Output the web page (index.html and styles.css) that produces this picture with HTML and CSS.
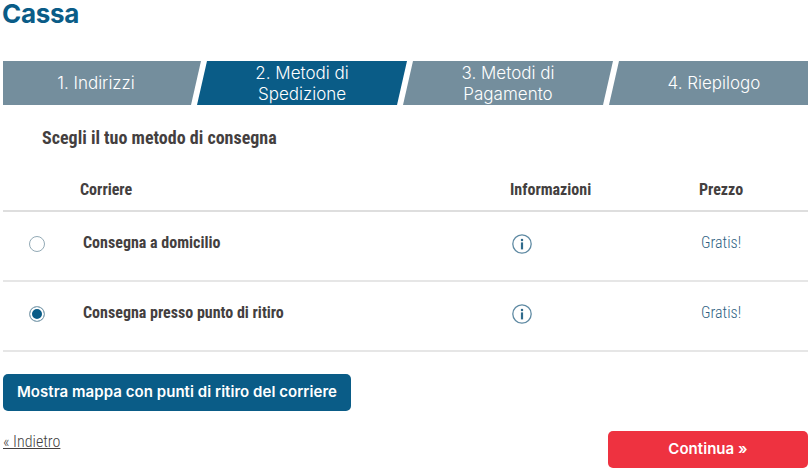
FILE: index.html
```html
<!DOCTYPE html>
<html lang="it">
<head>
<meta charset="utf-8">
<title>Cassa</title>
<link rel="stylesheet" href="styles.css">
</head>
<body>
<main class="page">
  <h1 class="title">Cassa</h1>
  <ol class="steps">
    <li class="step step-first">1. Indirizzi</li>
    <li class="step step-active">2. Metodi di Spedizione</li>
    <li class="step">3. Metodi di Pagamento</li>
    <li class="step step-last">4. Riepilogo</li>
  </ol>
  <h2 class="subtitle">Scegli il tuo metodo di consegna</h2>
  <div class="table">
    <div class="row head">
      <div></div>
      <div class="c-name">Corriere</div>
      <div class="c-info">Informazioni</div>
      <div class="c-price">Prezzo</div>
    </div>
    <div class="row body">
      <div class="c-radio"><span class="radio"></span></div>
      <div class="c-name strong">Consegna a domicilio</div>
      <div class="c-info"><svg class="info" viewBox="0 0 20 20" width="20" height="20"><circle cx="10" cy="10" r="9.2" fill="none" stroke="#5f8aa3" stroke-width="1.3"/><circle cx="10" cy="5.9" r="1.25" fill="#2f6a8c"/><rect x="8.9" y="8.4" width="2.2" height="7" fill="#2f6a8c"/></svg></div>
      <div class="c-price price">Gratis!</div>
    </div>
    <div class="row body">
      <div class="c-radio"><span class="radio checked"></span></div>
      <div class="c-name strong">Consegna presso punto di ritiro</div>
      <div class="c-info"><svg class="info" viewBox="0 0 20 20" width="20" height="20"><circle cx="10" cy="10" r="9.2" fill="none" stroke="#5f8aa3" stroke-width="1.3"/><circle cx="10" cy="5.9" r="1.25" fill="#2f6a8c"/><rect x="8.9" y="8.4" width="2.2" height="7" fill="#2f6a8c"/></svg></div>
      <div class="c-price price">Gratis!</div>
    </div>
  </div>
  <button class="btn btn-map" type="button">Mostra mappa con punti di ritiro del corriere</button>
  <div class="footer">
    <a class="back" href="#">« Indietro</a>
    <button class="btn btn-next" type="button">Continua »</button>
  </div>
</main>
</body>
</html>
```
FILE: styles.css
```css
* { box-sizing: border-box; }
html, body { margin: 0; padding: 0; background: #fff; }
body { font-family: "Roboto", "Liberation Sans", sans-serif; color: #443f3f; overflow: hidden; }
.page { width: 811px; height: 473px; padding: 0 3px; }
.title { margin: 0 0 0 -1px; height: 61px; font: 700 26px/27px "Inter", sans-serif; color: #0a5c87; letter-spacing: -0.3px; }
.steps { list-style: none; margin: 0; padding: 0; display: grid; grid-template-columns: 198px 206px 206px 195px; height: 44px; width: 805px; }
.step { margin-left: -4px; height: 44px; background: #748e9d; color: #fff; font: 300 17px/21px "Inter", sans-serif; display: flex; align-items: center; justify-content: center; text-align: center; padding: 1px 30px 0; clip-path: polygon(10px 0, 100% 0, calc(100% - 10px) 100%, 0 100%); }
.step-first { margin-left: 0; padding: 0 12px 0 0; clip-path: polygon(0 0, 100% 0, calc(100% - 10px) 100%, 0 100%); }
.step-last { padding: 0 0 0 11px; clip-path: polygon(10px 0, 100% 0, 100% 100%, 0 100%); }
.step-active { background: #0a5c87; }
.subtitle { margin: 0; padding: 22px 0 0 39px; height: 65px; font: 700 18px/22px "Roboto", sans-serif; font-stretch: 75%; color: #443f3f; }
.table { width: 805px; }
.row { display: grid; grid-template-columns: 77px 430px 157px 108px; align-items: center; }
.head { height: 42px; border-bottom: 2px solid #dedede; font-weight: 700; font-size: 16px; font-stretch: 75%; padding-bottom: 2px; }
.body { height: 70px; border-bottom: 2px solid #e6e6e6; }
.c-price { text-align: center; }
.c-radio { padding-left: 26px; padding-bottom: 4px; display: flex; }
.body .c-info { padding-bottom: 4px; }
.strong { font-weight: 700; font-size: 16px; font-stretch: 75%; padding-left: 3px; padding-bottom: 7px; }
.price { font-weight: 300; font-size: 16px; font-stretch: 75%; color: #2f5f82; padding-bottom: 7px; }
.info { display: block; margin-left: 2px; }
.radio { display: block; width: 16px; height: 16px; border-radius: 50%; border: 1px solid #93aab6; background: #fff; }
.radio.checked { background: #0a5c87; box-shadow: inset 0 0 0 2px #fff; }
.btn { display: block; border: 0; border-radius: 5px; color: #fff; font: 600 15px/18px "Inter", sans-serif; letter-spacing: 0.05px; padding: 0 0 2px; }
.btn-map { margin-top: 22px; width: 348px; height: 37px; background: #0a5c87; }
.footer { display: flex; justify-content: space-between; align-items: flex-start; margin-top: 20px; }
.back { font-weight: 300; font-size: 16px; line-height: 22px; font-stretch: 75%; color: #443f3f; text-decoration: underline; }
.btn-next { width: 200px; height: 37px; background: #ee3240; }
```
